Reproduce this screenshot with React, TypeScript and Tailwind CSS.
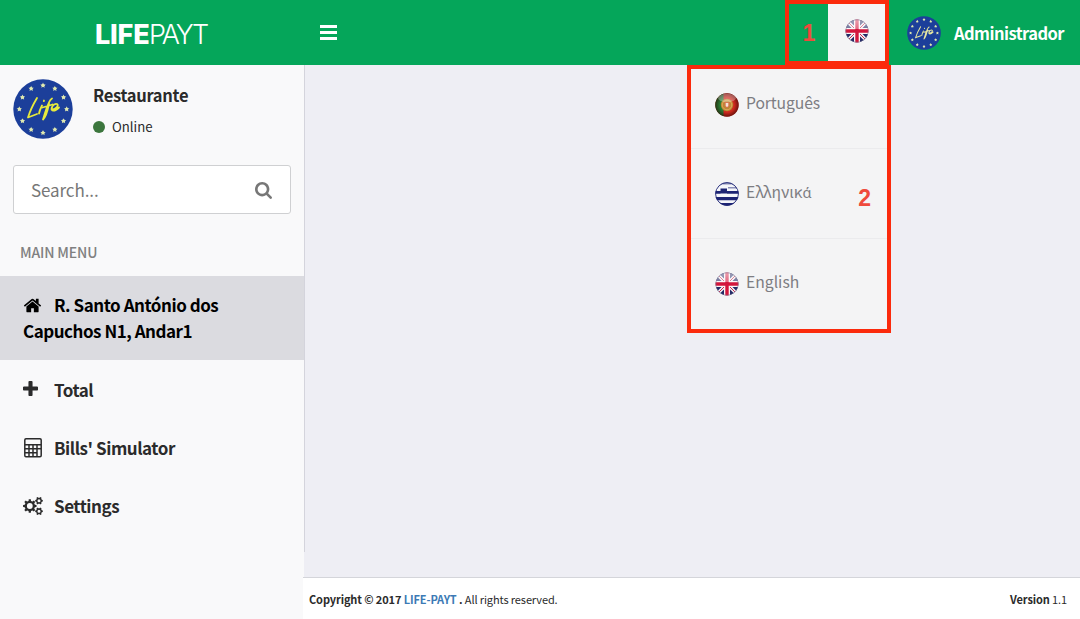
import React from "react";

const STARS = Array.from({ length: 12 }, (_, i) => {
  const a = (i * Math.PI) / 6;
  return { x: 30 + 23.7 * Math.sin(a), y: 30 - 23.7 * Math.cos(a) };
});

function gear(cx: number, cy: number, outer: number, inner: number, teeth: number) {
  const pts: string[] = [];
  for (let i = 0; i < teeth; i++) {
    const base = (i * 2 * Math.PI) / teeth;
    const step = (2 * Math.PI) / teeth;
    [[-0.3, inner], [-0.2, outer], [0.2, outer], [0.3, inner]].forEach(([o, r]) => {
      const a = base + o * step;
      pts.push(`${(cx + r * Math.cos(a)).toFixed(2)} ${(cy + r * Math.sin(a)).toFixed(2)}`);
    });
  }
  return `M${pts.join("L")}Z`;
}

function hole(cx: number, cy: number, r: number) {
  return `M${cx - r} ${cy}a${r} ${r} 0 1 0 ${2 * r} 0a${r} ${r} 0 1 0 ${-2 * r} 0Z`;
}

function LifeBadge({ className, color }: { className: string; color: string }) {
  return (
    <svg viewBox="0 0 60 60" className={className}>
      <circle cx="30" cy="30" r="29.7" fill="#1c3f9a" />
      {STARS.map((s, i) => (
        <g key={i} transform={`translate(${s.x} ${s.y})`}>
          <circle r="1.5" fill="#dfe8b0" />
          <path d="M0-2.700.8-.8 2.700-.7 1.200.6 1.700 2.500 0 1.400-1.700 2.500-1.200.6-2.700-.7-.8-.8Z" fill="#dfe8b0" />
        </g>
      ))}
      <g fill="none" stroke={color} strokeWidth="1.8" strokeLinecap="round" strokeLinejoin="round">
        <path d="M24 19C21 24 17 32 15 38.500c3-1 6-2.500 9-3.500" />
        <path d="M29 26.500c-1.500 3-2.500 5-3 8M31 21.500l-.2.600" />
        <path d="M39 19.500c-4 2-6 12-9 21 4-4 5-11 6-16M29.500 28.500c4-1 7-2 10-3" />
        <path d="M38.500 30.500c4 0 8-4 5.500-5.500-3.500-1-7 4.500-4.500 6.500 2.500 1 4.500-1 6.500-3" />
      </g>
    </svg>
  );
}

function UkFlag({ id, className }: { id: string; className: string }) {
  return (
    <svg viewBox="0 0 24 24" className={className}>
      <defs>
        <clipPath id={id}><circle cx="12" cy="12" r="11.4" /></clipPath>
        <linearGradient id={id + "g"} x2="0" y2="1">
          <stop offset="0" stopColor="#fff" stopOpacity=".6" />
          <stop offset=".42" stopColor="#fff" stopOpacity=".35" />
          <stop offset=".43" stopColor="#fff" stopOpacity="0" />
        </linearGradient>
      </defs>
      <g clipPath={`url(#${id})`}>
        <path fill="#232a66" d="M0 0h24v24H0z" />
        <path d="M0 0l24 24M24 0L0 24" stroke="#f4f1f4" strokeWidth="3.4" />
        <path d="M0 0l24 24M24 0L0 24" stroke="#c8264a" strokeWidth="1" />
        <path d="M12 0v24M0 12h24" stroke="#f8f4f6" strokeWidth="6" />
        <path d="M12 0v24M0 12h24" stroke="#d3163c" strokeWidth="3.4" />
        <path fill={`url(#${id}g)`} d="M0 0h24v24H0z" />
      </g>
      <circle cx="12" cy="12" r="11.1" fill="none" stroke="#76728c" strokeOpacity=".55" strokeWidth=".7" />
    </svg>
  );
}

function GreekFlag() {
  return (
    <svg viewBox="0 0 24 24" className="size-[24px] shrink-0">
      <defs><clipPath id="gr"><circle cx="12" cy="12" r="11.700" /></clipPath></defs>
      <g clipPath="url(#gr)">
        <path fill="#f5f6fa" d="M0 0h24v24H0z" />
        <path fill="#8c90b8" d="M0 0h24v2.500H0z" />
        <path fill="#1d2474" d="M5.500 6.500H12v5H5.500zM12 9h12v2.800H12zM0 9h5.500v2.800H0zM0 15h24v3.200H0zM0 21h24v3H0z" />
        <path d="M13 5.800h9" stroke="#8c90b8" strokeWidth="1.600" />
      </g>
      <circle cx="12" cy="12" r="11.400" fill="none" stroke="#1d2474" strokeWidth=".9" />
    </svg>
  );
}

function PortugalFlag() {
  return (
    <svg viewBox="0 0 24 24" className="size-[24px] shrink-0">
      <defs>
        <clipPath id="pt"><circle cx="12" cy="12" r="11.700" /></clipPath>
        <radialGradient id="ptg" cx=".5" cy=".5" r=".5">
          <stop offset=".6" stopColor="#200" stopOpacity="0" />
          <stop offset="1" stopColor="#200" stopOpacity=".6" />
        </radialGradient>
      </defs>
      <g clipPath="url(#pt)">
        <path fill="#cf2a1f" d="M0 0h24v24H0z" />
        <path fill="#2a7a33" d="M0 0h8.500v24H0z" />
        <circle cx="12" cy="12" r="6.200" fill="#b98a34" />
        <circle cx="12" cy="12" r="4.800" fill="none" stroke="#e3a45a" strokeWidth="1" />
        <path d="M9.500 9h5v4q-2.500 4-5 0z" fill="#d9704a" />
        <path d="M10.700 10h2.600v3q-1.300 1.700-2.600 0z" fill="#f1e3d8" />
        <path fill="url(#ptg)" d="M0 0h24v24H0z" />
        <ellipse cx="12" cy="5" rx="9" ry="4.200" fill="#fff" opacity=".3" />
      </g>
    </svg>
  );
}

function HomeIcon() {
  return (
    <svg viewBox="0 0 1792 1792" className="inline-block size-[19px] align-[-3px]" fill="currentColor">
      <path d="M1472 992v480q0 26-19 45t-45 19h-384v-384h-256v384h-384q-26 0-45-19t-19-45v-480q0-1 .5-3t.5-3l575-474 575 474q1 2 1 6zm223-69l-62 74q-8 9-21 11h-3q-13 0-21-7l-692-577-692 577q-12 8-24 7-13-2-21-11l-62-74q-8-10-7-23.500t11-21.500l719-599q32-26 76-26t76 26l244 204v-195q0-14 9-23t23-9h192q14 0 23 9t9 23v408l219 182q10 8 11 21.500t-7 23.500z" />
    </svg>
  );
}

function PlusIcon() {
  return (
    <svg viewBox="192 128 1408 1408" className="mb-[2px] h-[15px] w-[15px]" fill="currentColor">
      <path d="M1600 736v192q0 40-28 68t-68 28h-416v416q0 40-28 68t-68 28h-192q-40 0-68-28t-28-68v-416h-416q-40 0-68-28t-28-68v-192q0-40 28-68t68-28h416v-416q0-40 28-68t68-28h192q40 0 68 28t28 68v416h416q40 0 68 28t28 68z" />
    </svg>
  );
}

function CalculatorIcon() {
  return (
    <svg viewBox="0 0 18 20" className="ml-[0.500px] h-[20px] w-[18px]" fill="none" stroke="currentColor">
      <rect x=".8" y=".8" width="16.400" height="18" rx="1.200" strokeWidth="1.500" />
      <path d="M1 6.800h16M1 10.700h12M1 14.700h12M5 7v12M9 7v12M13 7v12" strokeWidth="1.500" />
      <path d="M13 10.700h4" strokeWidth="1.500" />
    </svg>
  );
}

function CogsIcon() {
  return (
    <svg viewBox="0 0 20 20" className="size-[20px]" fill="currentColor" fillRule="evenodd">
      <path d={gear(6.8, 10, 6.800, 5.200, 8) + hole(6.8, 10, 2.900)} />
      <path d={gear(16, 4.7, 3.900, 3, 6) + hole(16, 4.7, 1.500)} />
      <path d={gear(16, 15.3, 3.900, 3, 6) + hole(16, 15.3, 1.500)} />
    </svg>
  );
}

export default function App() {
  return (
    <div className="relative flex h-[619px] w-[1080px] flex-col overflow-hidden bg-[#eeeef4] font-['Noto_Sans_CJK_SC','Noto_Sans',sans-serif] text-[#2b2b2b]">
      <header className="flex h-[65px] shrink-0 items-center bg-[#05a65a] text-white">
        <div className="flex w-[304px] items-center pt-[4px] pl-[95px] font-['Inter',sans-serif] text-[27px] leading-[30px] whitespace-nowrap">
          <span className="w-[54px] font-extrabold tracking-[-0.200px]">LIFE</span>
          <span className="font-light tracking-[-2.200px]">PAYT</span>
        </div>
        <div className="ml-[16px] flex w-[17px] flex-col gap-[3px]">
          <div className="h-[3px] bg-white" />
          <div className="h-[3px] bg-white" />
          <div className="h-[3px] bg-white" />
        </div>
        <div className="ml-auto flex h-[65px] items-center">
          <div className="flex h-[65px] w-[104px] border-4 border-[#fb2a0c]">
            <div className="flex w-[39px] items-center justify-center pt-[2px] pl-[1px] font-['Liberation_Sans',sans-serif] text-[23px] font-bold text-[#ef4a3c]">1</div>
            <div className="flex flex-1 items-center justify-center bg-[#f4f4f5]">
              <UkFlag id="uk1" className="mb-[3px] size-[24px]" />
            </div>
          </div>
          <LifeBadge className="ml-[18px] size-[34px]" color="#e6e7a0" />
          <span className="ml-[13px] w-[126px] text-[16.500px] leading-[26px] font-bold tracking-[-0.550px] whitespace-nowrap">Administrador</span>
        </div>
      </header>

      <div className="flex min-h-0 flex-1">
        <aside className="flex w-[304px] shrink-0 flex-col bg-[#f9f9fa]">
          <div className="flex h-[487px] w-[305px] flex-col border-r border-[#d4d4dc] bg-[#f9f9fa]">
            <div className="flex h-[100px] pt-[14px] pl-[13px]">
              <LifeBadge className="size-[60px]" color="#e8ea3c" />
              <div className="ml-[20px] flex flex-col">
                <span className="mt-[3px] text-[16.500px] leading-[26px] font-bold tracking-[-0.300px]">Restaurante</span>
                <div className="mt-[8px] flex items-center text-[13.200px] leading-[22px]">
                  <span className="mr-[7px] size-[12px] rounded-full bg-[#3c763d]" />
                  Online
                </div>
              </div>
            </div>
            <div className="ml-[13px] flex h-[49px] w-[278px] items-center justify-between rounded-[3px] border border-[#cfd0d2] bg-white pr-[18px] pl-[17px] text-[17px] tracking-[-0.100px] text-[#777]">
              <span className="leading-[26px]">Search...</span>
              <svg viewBox="64 128 1664 1664" className="mt-[2px] size-[17px]" fill="#777">
                <path d="M1216 832q0-185-131.500-316.500t-316.500-131.500-316.500 131.500-131.500 316.500 131.500 316.500 316.500 131.500 316.500-131.500 131.500-316.500zm512 832q0 52-38 90t-90 38q-54 0-90-38l-343-342q-179 124-399 124-143 0-273.500-55.500t-225-150-150-225-55.500-273.500 55.500-273.500 150-225 225-150 273.500-55.500 273.500 55.500 225 150 150 225 55.500 273.500q0 220-124 399l343 343q37 37 37 90z" />
              </svg>
            </div>
            <div className="flex h-[62px] items-center pt-[14px] pl-[20px] text-[14px] font-medium tracking-[-0.150px] text-[#808080]">MAIN MENU</div>
            <div className="h-[84px] bg-[#dbdbe0] pt-[16px] pl-[23px] text-[17px] leading-[26px] font-bold tracking-[-0.470px] whitespace-nowrap text-black">
              <HomeIcon /><span className="ml-[12px]">R. Santo António dos</span>
              <br />
              Capuchos N1, Andar1
            </div>
            <nav className="text-[17px] font-bold tracking-[-0.460px]">
              <div className="flex h-[58px] items-center pt-[1px] pl-[23px]"><span className="w-[31px]"><PlusIcon /></span>Total</div>
              <div className="flex h-[58px] items-center pt-[1px] pl-[23px]"><span className="w-[31px]"><CalculatorIcon /></span>Bills' Simulator</div>
              <div className="flex h-[58px] items-center pt-[1px] pl-[23px]"><span className="w-[31px]"><CogsIcon /></span>Settings</div>
            </nav>
          </div>
        </aside>
        <main className="flex flex-1 flex-col justify-end">
          <footer className="-ml-px flex h-[42px] items-center justify-between border-t border-[#d4d5da] bg-white pt-[1px] pr-[13px] pl-[6px] text-[11px] tracking-[-0.110px] whitespace-nowrap">
            <span><b>Copyright © 2017 <span className="text-[#3c7ab5]">LIFE-PAYT</span> .</b> All rights reserved.</span>
            <span><b>Version</b> 1.1</span>
          </footer>
        </main>
      </div>

      <div className="absolute top-[65px] left-[687px] h-[268px] w-[204px] border-4 border-[#fb2a0c] bg-[#f4f4f5] text-[15.700px] text-[#7d7d82]">
        <div className="flex h-[80px] items-center border-b border-[#ebebed] pl-[24px]">
          <span className="mt-[-7px] flex items-center gap-[7px]"><PortugalFlag /><span className="pb-[5px] tracking-[-0.100px]">Português</span></span>
        </div>
        <div className="flex h-[90px] items-center border-b border-[#ebebed] pl-[24px]">
          <span className="flex items-center gap-[7px]"><GreekFlag /><span className="pb-[3px] tracking-[-0.050px]">Ελληνικ<span className="font-['Noto_Sans',sans-serif] text-[14.500px]">ά</span></span></span>
          <span className="mr-[16px] ml-auto pt-[9px] font-['Liberation_Sans',sans-serif] text-[23px] font-bold text-[#ef4a3c]">2</span>
        </div>
        <div className="flex h-[90px] items-center pl-[24px]">
          <span className="flex items-center gap-[7px]"><UkFlag id="uk2" className="size-[24px]" /><span className="pb-[5px]">English</span></span>
        </div>
      </div>
    </div>
  );
}
